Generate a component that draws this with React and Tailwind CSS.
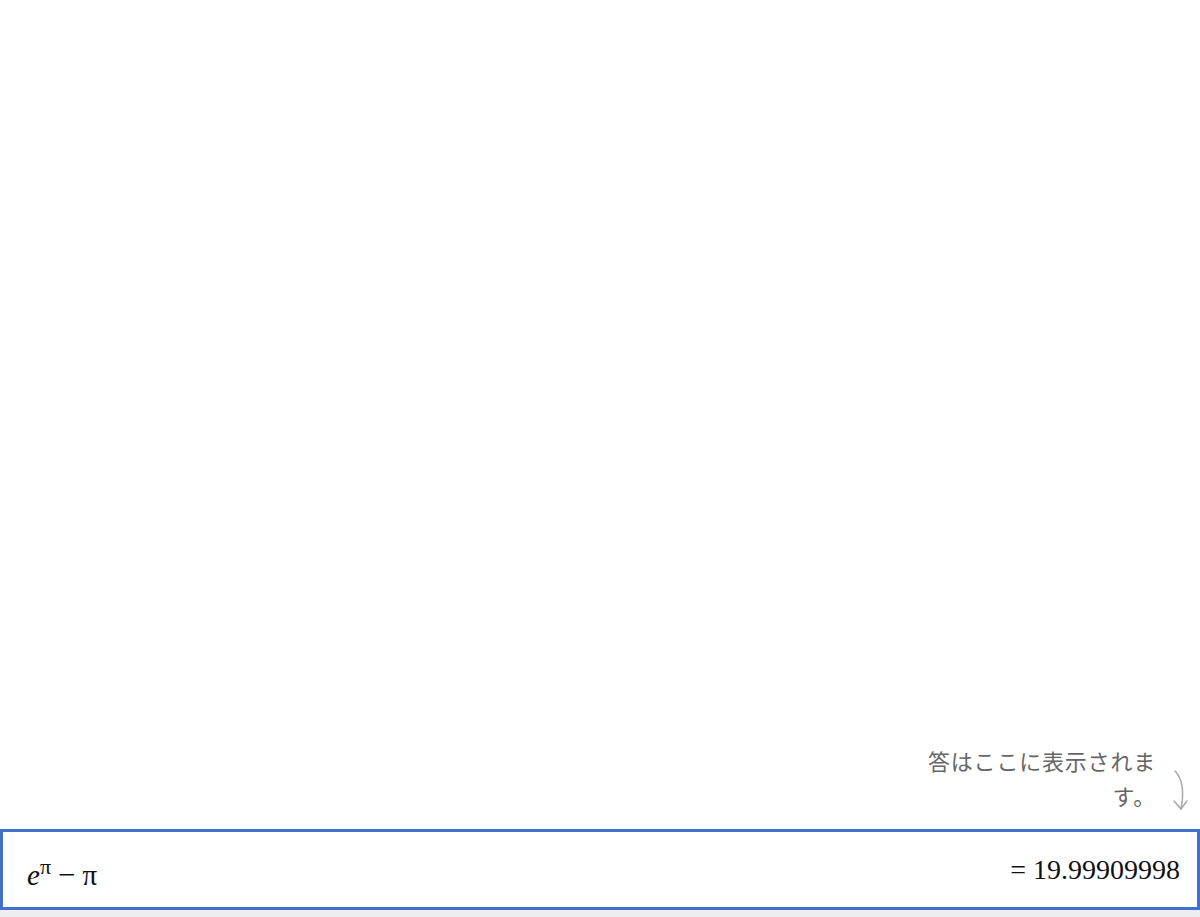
export default function App() {
    return (
        <div className="min-h-[917px] flex flex-col justify-end bg-white" style={{ fontFamily: '"Liberation Serif", serif' }}>
            <div className="flex justify-end items-start pr-[6px] pb-[14px]">
                <p
                    className="w-[238px] text-right text-[22px] tracking-[0.8px] leading-[35px] text-[#666666]"
                    style={{ fontFamily: '"Noto Sans CJK JP", sans-serif' }}
                >
                    答はここに表示されます。
                </p>
                <svg className="mt-[26px] ml-[14px]" width="24" height="46" viewBox="0 0 24 46" fill="none" stroke="#a8a8a8" strokeWidth="1.5" strokeLinecap="round">
                    <path d="M5 2 C 13 10, 14 24, 11 40" />
                    <path d="M4 32 L 11 40 L 17 32" />
                </svg>
            </div>
            <div className="h-[81px] border-[3px] border-[#4270cf] bg-white flex items-center justify-between pl-[24px] pr-[17px]">
                <div className="text-[29px] leading-none text-[#111111] pt-[10px]">
                    <span className="italic">e</span>
                    <span className="relative -top-[11px] text-[22px]">π</span>
                    <span className="ml-[7px] text-[31px]">−</span>
                    <span className="ml-[7px]">π</span>
                </div>
                <div className="text-[28px] text-[#111111]">= 19.99909998</div>
            </div>
            <div className="h-[7px] bg-[#eceef0]" />
        </div>
    );
}
